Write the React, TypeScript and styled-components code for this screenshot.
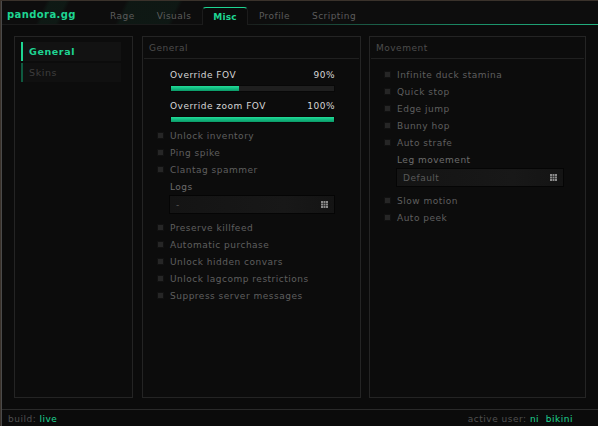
import React from "react";
import styled, { createGlobalStyle } from "styled-components";

const GlobalStyle = createGlobalStyle`
  html, body {
    margin: 0;
    padding: 0;
    background: #3a322b;
    overflow: hidden;
  }
  * {
    box-sizing: border-box;
  }
`;

const GREEN = "#1ed592";

const Window = styled.div`
  margin: 1px 0 0 1px;
  height: 425px;
  border-left: 1px solid #4a4a4a;
  background: #0b0b0b;
  display: flex;
  flex-direction: column;
  font-family: "DejaVu Sans", Verdana, sans-serif;
  font-size: 9px;
  letter-spacing: 0.5px;
`;

const Header = styled.div`
  height: 23px;
  display: flex;
  align-items: flex-end;
  background:
    linear-gradient(115deg, transparent 40px, rgba(20, 80, 55, 0.18) 44px, rgba(20, 80, 55, 0.18) 58px, transparent 62px),
    linear-gradient(115deg, transparent 112px, rgba(20, 80, 55, 0.16) 116px, rgba(20, 80, 55, 0.16) 160px, transparent 164px),
    #0d0d0d;
  position: relative;
  &::after {
    content: "";
    position: absolute;
    left: 0;
    right: 0;
    bottom: -1px;
    height: 1px;
    background: linear-gradient(90deg, #1a1a1a 0%, #1a1a1a 40%, #1a8f68 80%, #22b07f 100%);
  }
`;

const Logo = styled.div`
  color: ${GREEN};
  font-weight: bold;
  font-size: 10px;
  letter-spacing: 0.4px;
  padding: 0 0 4px 5px;
  width: 97px;
`;

const Tabs = styled.div`
  display: flex;
  align-items: flex-end;
`;

const Tab = styled.div<{ $active?: boolean }>`
  height: 18px;
  padding: 0 10px;
  display: flex;
  align-items: center;
  justify-content: center;
  color: ${(p) => (p.$active ? GREEN : "#5c5c5c")};
  font-weight: ${(p) => (p.$active ? "bold" : "normal")};
  letter-spacing: ${(p) => (p.$active ? "0.2px" : "0.45px")};
  background: ${(p) => (p.$active ? "#0b0b0b" : "transparent")};
  border: 1px solid ${(p) => (p.$active ? "#1c1c1c" : "transparent")};
  border-top-color: ${(p) => (p.$active ? GREEN : "transparent")};
  border-bottom: none;
  border-radius: 4px 4px 0 0;
  position: relative;
  z-index: 1;
  margin-bottom: ${(p) => (p.$active ? "-1px" : "0")};
`;

const Body = styled.div`
  flex: 1;
  display: grid;
  grid-template-columns: 119px 219px 216px;
  column-gap: 9px;
  padding: 12px 0 11px 12px;
  border-bottom: 1px solid #2a2a2a;
`;

const Panel = styled.div<{ $shift?: number }>`
  border: 1px solid #242424;
  background: #0c0c0c;
  display: flex;
  flex-direction: column;
  margin-left: ${(p) => p.$shift ?? 0}px;
`;

const SideList = styled.div`
  display: flex;
  flex-direction: column;
  gap: 2px;
  padding: 5px 11px 0 6px;
`;

const SideItem = styled.div<{ $active?: boolean }>`
  height: 19px;
  display: flex;
  align-items: center;
  padding-left: 6px;
  border-left: 2px solid ${(p) => (p.$active ? GREEN : "#0f5a40")};
  background: ${(p) => (p.$active ? "#121212" : "#101010")};
  color: ${(p) => (p.$active ? GREEN : "#3e3e3e")};
  font-size: 9.5px;
  letter-spacing: 0.6px;
  font-weight: ${(p) => (p.$active ? 600 : "normal")};
`;

const PanelTitle = styled.div`
  height: 22px;
  display: flex;
  align-items: center;
  padding-left: 5px;
  color: #4d4d4d;
  border-bottom: 1px solid #202020;
  margin: 0 1px;
`;

const PanelBody = styled.div<{ $top: number; $right: number }>`
  display: flex;
  flex-direction: column;
  padding: ${(p) => p.$top}px ${(p) => p.$right}px 0 14px;
`;

const SliderHead = styled.div`
  height: 15px;
  display: flex;
  align-items: center;
  justify-content: space-between;
  color: #d6d6d6;
  margin-left: 13px;
`;

const Track = styled.div<{ $gap: number }>`
  height: 7px;
  margin: 3px 0 ${(p) => p.$gap}px 13px;
  background: #1f1f1f;
  border: 1px solid #080808;
`;

const Fill = styled.div`
  height: 100%;
  background: linear-gradient(180deg, #22dc98 0%, #10b57c 60%, #0c9866 100%);
`;

const Row = styled.label`
  height: 17px;
  display: flex;
  align-items: center;
  gap: 6px;
  color: #5f5f5f;
`;

const Box = styled.span`
  width: 7px;
  height: 7px;
  background: #262626;
  border: 1px solid #111;
  flex-shrink: 0;
`;

const FieldLabel = styled.div`
  height: 17px;
  display: flex;
  align-items: center;
  margin-left: 13px;
  color: #6c6c6c;
`;

const Select = styled.div`
  height: 19px;
  margin: 0 0 5px 12px;
  display: flex;
  align-items: center;
  justify-content: space-between;
  padding: 0 6px 0 6px;
  background: linear-gradient(90deg, #141414 0%, #181818 70%, #141414 100%);
  border: 1px solid #050505;
  color: #5a5a5a;
`;

const Footer = styled.div`
  height: 16px;
  display: flex;
  align-items: center;
  justify-content: space-between;
  padding: 2px 25px 0 6px;
  color: #4f4f4f;
`;

const Accent = styled.span`
  color: ${GREEN};
`;

const Slider = ({ label, value, pct, gap }: { label: string; value: string; pct: number; gap: number }) => (
  <>
    <SliderHead>
      <span>{label}</span>
      <span>{value}</span>
    </SliderHead>
    <Track $gap={gap}>
      <Fill style={{ width: `${pct}%` }} />
    </Track>
  </>
);

const Check = ({ label }: { label: string }) => (
  <Row>
    <Box />
    {label}
  </Row>
);

// 3x3 dot grid shown at the right of every dropdown
const GridIcon = () => (
  <svg width="7" height="7" viewBox="0 0 7 7">
    {[0, 2.5, 5].map((y) =>
      [0, 2.5, 5].map((x) => <rect key={`${x}-${y}`} x={x} y={y} width="2" height="2" fill="#8a8a8a" />)
    )}
  </svg>
);

const Dropdown = ({ value }: { value: string }) => (
  <Select>
    <span>{value}</span>
    <GridIcon />
  </Select>
);

export default function App() {
  return (
    <>
      <GlobalStyle />
      <Window>
        <Header>
          <Logo>pandora.gg</Logo>
          <Tabs>
            <Tab>Rage</Tab>
            <Tab>Visuals</Tab>
            <Tab $active>Misc</Tab>
            <Tab>Profile</Tab>
            <Tab>Scripting</Tab>
          </Tabs>
        </Header>

        <Body>
          <Panel>
            <SideList>
              <SideItem $active>General</SideItem>
              <SideItem>Skins</SideItem>
            </SideList>
          </Panel>

          <Panel>
            <PanelTitle>General</PanelTitle>
            <PanelBody $top={8} $right={25}>
              <Slider label="Override FOV" value="90%" pct={42} gap={6} />
              <Slider label="Override zoom FOV" value="100%" pct={100} gap={4} />
              <Check label="Unlock inventory" />
              <Check label="Ping spike" />
              <Check label="Clantag spammer" />
              <FieldLabel>Logs</FieldLabel>
              <Dropdown value="-" />
              <Check label="Preserve killfeed" />
              <Check label="Automatic purchase" />
              <Check label="Unlock hidden convars" />
              <Check label="Unlock lagcomp restrictions" />
              <Check label="Suppress server messages" />
            </PanelBody>
          </Panel>

          <Panel $shift={-1}>
            <PanelTitle>Movement</PanelTitle>
            <PanelBody $top={7} $right={21}>
              <Check label="Infinite duck stamina" />
              <Check label="Quick stop" />
              <Check label="Edge jump" />
              <Check label="Bunny hop" />
              <Check label="Auto strafe" />
              <FieldLabel>Leg movement</FieldLabel>
              <Dropdown value="Default" />
              <Check label="Slow motion" />
              <Check label="Auto peek" />
            </PanelBody>
          </Panel>
        </Body>

        <Footer>
          <span>
            build: <Accent>live</Accent>
          </span>
          <span>
            active user: <Accent>ni</Accent>&nbsp;&nbsp;<Accent>bikini</Accent>
          </span>
        </Footer>
      </Window>
    </>
  );
}
